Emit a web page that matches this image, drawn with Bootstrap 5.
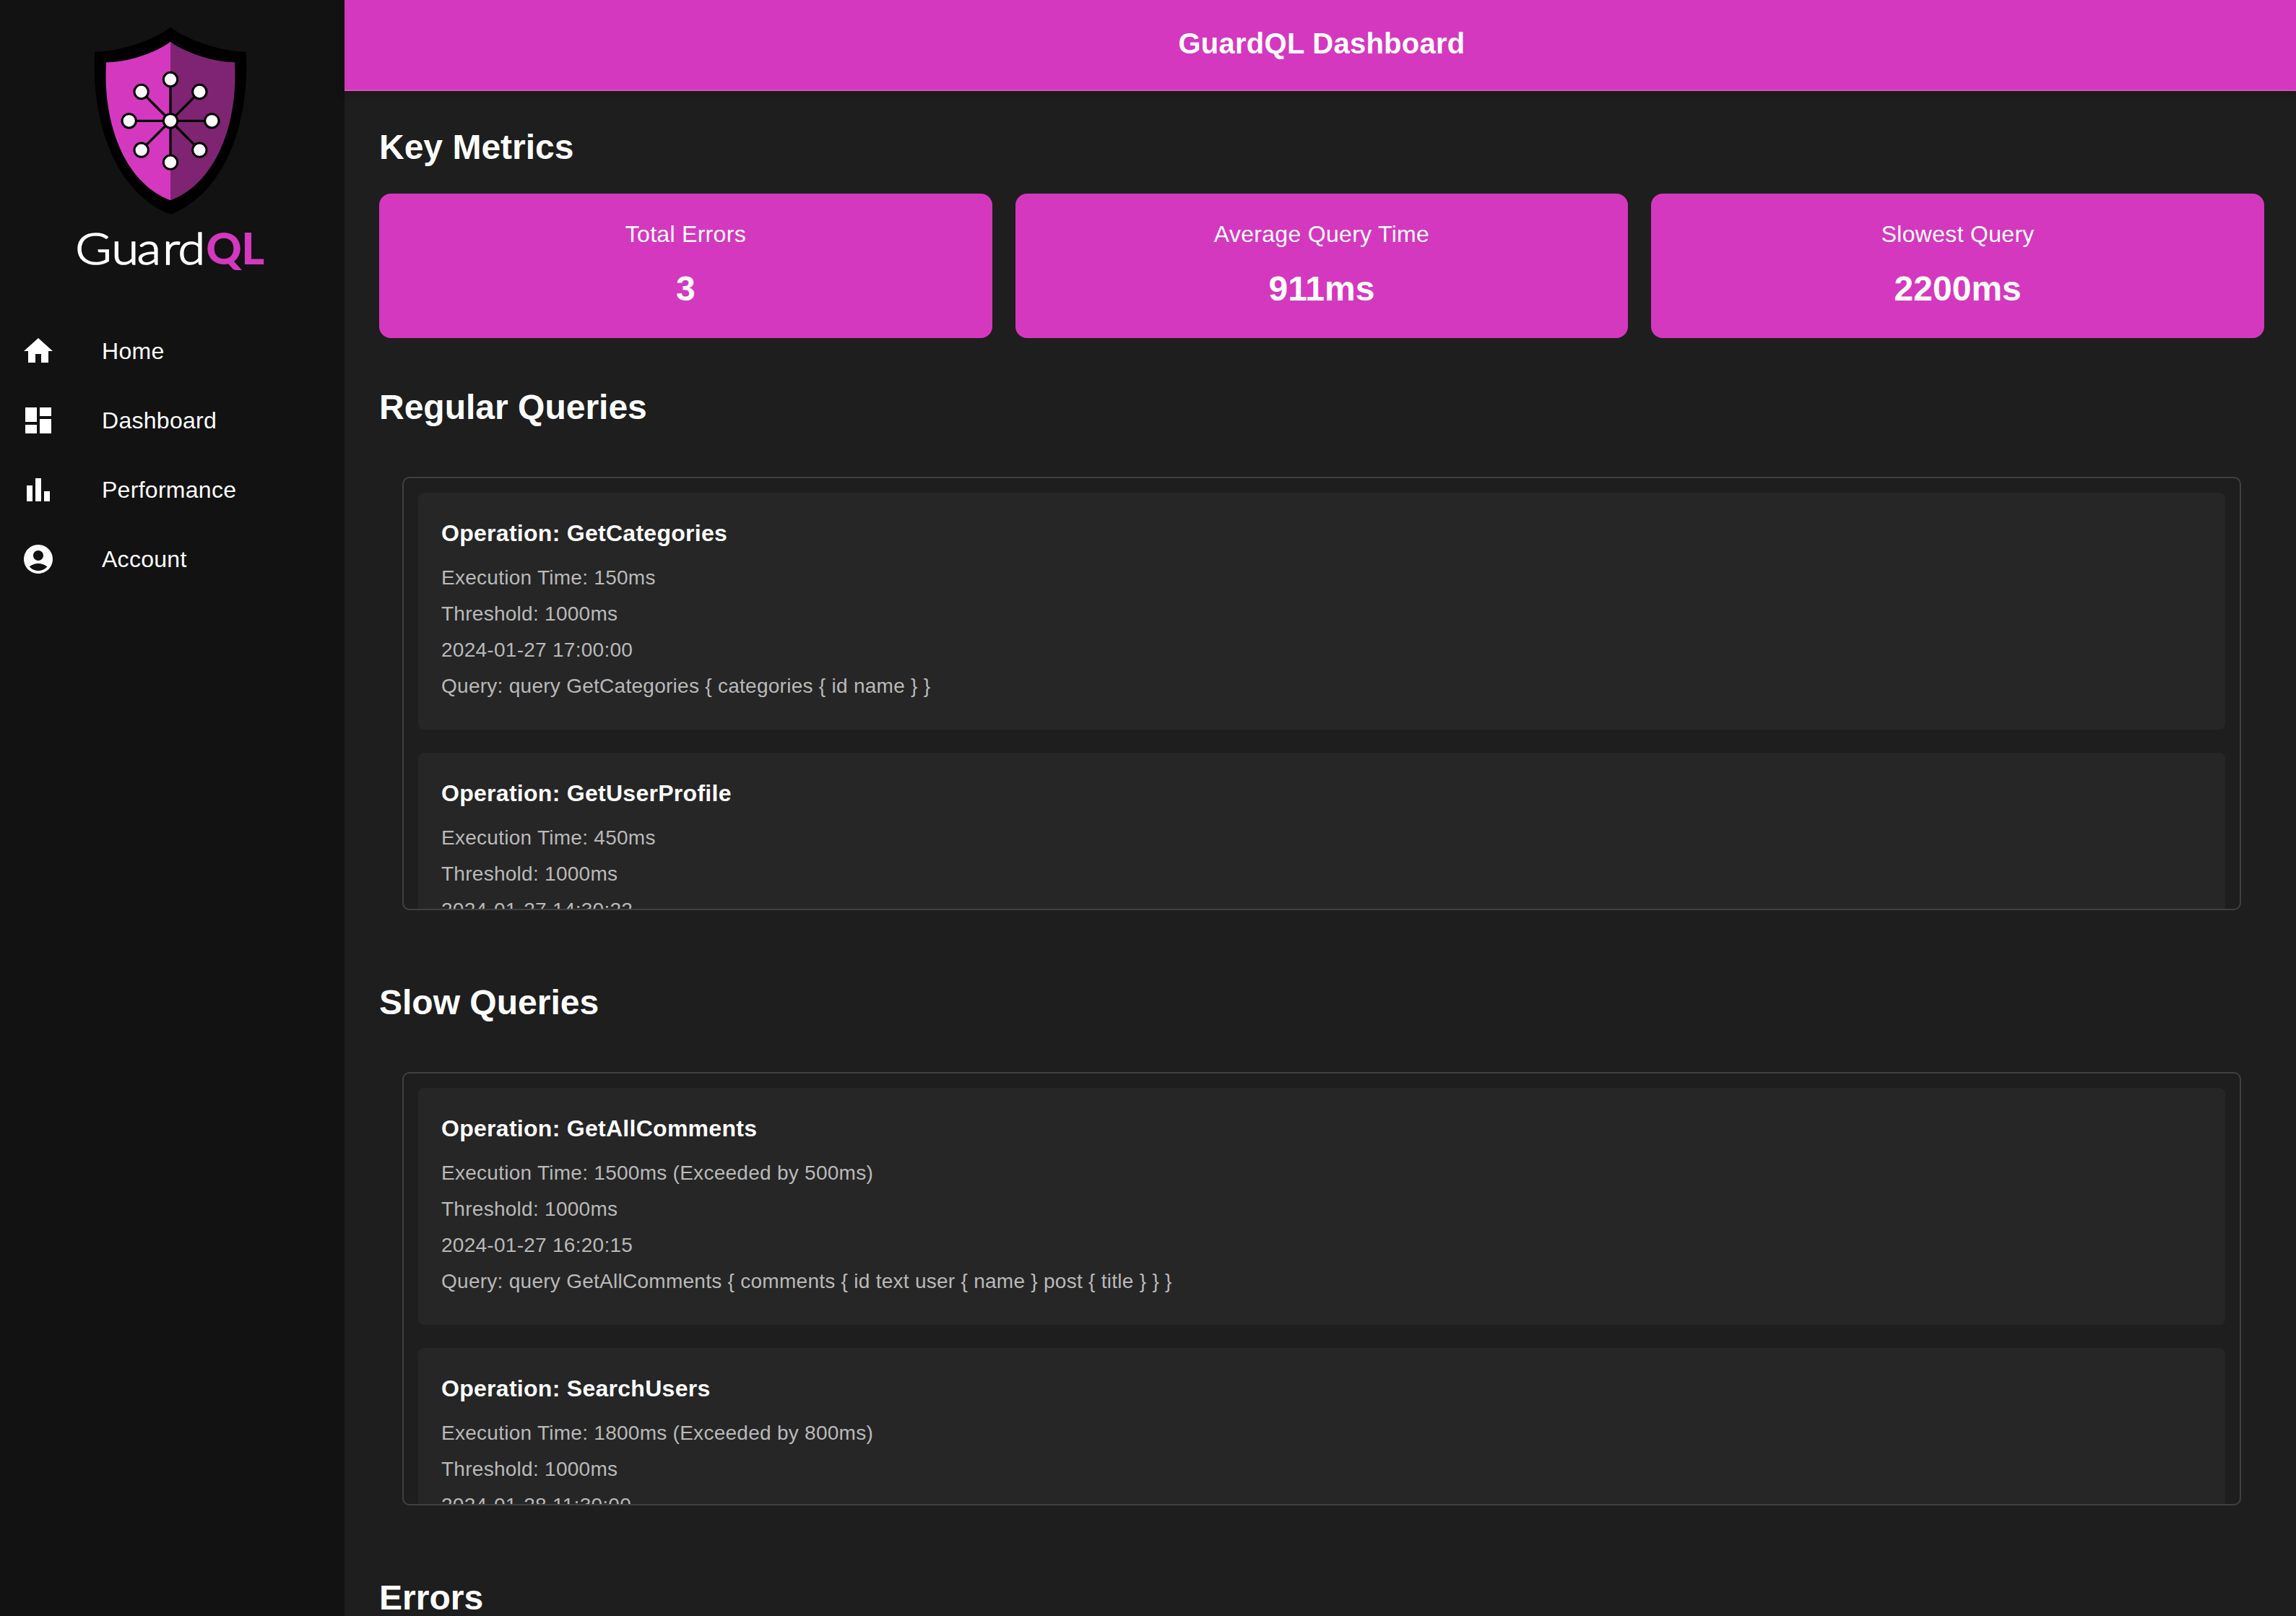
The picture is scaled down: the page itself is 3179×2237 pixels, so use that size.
<!DOCTYPE html>
<html lang="en">
<head>
<meta charset="utf-8">
<meta name="viewport" content="width=device-width, initial-scale=1">
<title>GuardQL Dashboard</title>
<link href="https://cdn.jsdelivr.net/npm/bootstrap@5.3.0/dist/css/bootstrap.min.css" rel="stylesheet">
<style>
  :root { --pink: #d438bf; }
  body { font-family: "Liberation Sans", Arial, sans-serif; background: #1e1e1e; color: #fff; height: 100vh; }
  .side { width: 477px; background: #121212; padding: 20px 29px 0; }
  .logo { width: 300px; height: 370px; margin-left: 61px; }
  .side .nav { margin-top: 48px; }
  .side .nav-link { height: 96px; padding: 0; gap: 64px; color: #fff; font-size: 32px; letter-spacing: .28px; }
  .side svg.ico { width: 48px; height: 48px; fill: #fff; }
  .topbar { height: 126px; padding: 28px 0 0 4px; background: var(--pink); border-bottom: 2px solid #d94fc7; box-shadow: 0 4px 12px rgba(0,0,0,.2); }
  .topbar h1 { font-size: 40px; line-height: 64px; letter-spacing: .26px; font-weight: 700; }
  .content { padding: 46px 44px 0 48px; }
  h2 { font-size: 48px; line-height: 64px; font-weight: 700; }
  .metrics { gap: 32px; margin: 32px 0 64px; }
  .metric { flex: 1 1 0; height: 200px; padding: 32px; border-radius: 16px; background: var(--pink); }
  .metric .name { font-size: 32px; line-height: 48px; letter-spacing: .3px; }
  .metric .value { font-size: 48px; line-height: 64px; margin-top: 20px; font-weight: 700; }
  .panel { height: 600px; margin: 64px 32px 96px; padding: 20px; border: 2px solid #404040; border-radius: 10px; }
  .entry { flex: none; height: 328px; padding: 32px; border-radius: 8px; background: #262626; margin-bottom: 32px; }
  .entry h3 { font-size: 32px; line-height: 48px; letter-spacing: .28px; font-weight: 700; margin-bottom: 18px; }
  .entry p { font-size: 28px; line-height: 40px; letter-spacing: .27px; color: #b9b9b9; margin-bottom: 10px; }
</style>
<script src="https://cdn.jsdelivr.net/npm/bootstrap@5.3.0/dist/js/bootstrap.bundle.min.js"></script>
</head>
<body class="d-flex overflow-hidden">
<aside class="side flex-shrink-0">
  <svg class="logo d-block" viewBox="0 0 900 1110" role="img" aria-label="GuardQL">
    <path d="M438 53C362 111 219 155 124 155C107 447 211 744 438 830C665 744 769 447 752 155C657 155 514 111 438 53Z" fill="#000"/>
    <path d="M438 113C373 163 251 199 171 199C156 447 245 699 438 772Z" fill="#d438bf"/>
    <path d="M438 113C503 163 625 199 705 199C720 447 631 699 438 772Z" fill="#7f2472"/>
    <path d="M438 270V614M266 442H610M317 321L559 563M559 321L317 563" stroke="#000" stroke-width="10"/>
    <g fill="#fff" stroke="#000" stroke-width="9">
      <circle cx="438" cy="442" r="29"/><circle cx="438" cy="270" r="29"/><circle cx="438" cy="614" r="29"/>
      <circle cx="266" cy="442" r="29"/><circle cx="610" cy="442" r="29"/><circle cx="317" cy="321" r="29"/>
      <circle cx="559" cy="321" r="29"/><circle cx="317" cy="563" r="29"/><circle cx="559" cy="563" r="29"/>
    </g>
    <g font-family="Lato, sans-serif" font-size="183">
      <text transform="scale(1.12 1)" x="38 173 267 362 419" y="1039" fill="#fff" font-weight="300" stroke="#fff" stroke-width="5">Guard</text>
      <text x="586 733" y="1039" fill="#d438bf" font-weight="900">QL</text>
    </g>
  </svg>
  <nav class="nav flex-column">
    <a class="nav-link d-flex align-items-center" href="#"><svg class="ico" viewBox="0 0 24 24"><path d="M10 20v-6h4v6h5v-8h3L12 3 2 12h3v8z"/></svg>Home</a>
    <a class="nav-link d-flex align-items-center" href="#"><svg class="ico" viewBox="0 0 24 24"><path d="M3 13h8V3H3zm0 8h8v-6H3zm10 0h8V11h-8zm0-18v6h8V3z"/></svg>Dashboard</a>
    <a class="nav-link d-flex align-items-center" href="#"><svg class="ico" viewBox="0 0 24 24"><path d="M4 9h4v11H4zm12 4h4v7h-4zm-6-9h4v16h-4z"/></svg>Performance</a>
    <a class="nav-link d-flex align-items-center" href="#"><svg class="ico" viewBox="0 0 24 24"><path d="M12 2C6.48 2 2 6.48 2 12s4.48 10 10 10 10-4.48 10-10S17.52 2 12 2zm0 4c1.93 0 3.5 1.57 3.5 3.5S13.93 13 12 13s-3.5-1.57-3.5-3.5S10.07 6 12 6zm0 14c-2.03 0-4.43-.82-6.14-2.88C7.55 15.8 9.68 15 12 15s4.45.8 6.14 2.12C16.43 19.18 14.03 20 12 20z"/></svg>Account</a>
  </nav>
</aside>
<main class="flex-grow-1">
  <header class="topbar text-center"><h1 class="m-0">GuardQL Dashboard</h1></header>
  <div class="content">
    <h2 class="m-0">Key Metrics</h2>
    <div class="metrics d-flex text-center">
      <div class="metric"><div class="name">Total Errors</div><div class="value">3</div></div>
      <div class="metric"><div class="name">Average Query Time</div><div class="value">911ms</div></div>
      <div class="metric"><div class="name">Slowest Query</div><div class="value">2200ms</div></div>
    </div>
    <h2 class="m-0">Regular Queries</h2>
    <section class="panel d-flex flex-column overflow-hidden">
      <article class="entry">
        <h3>Operation: GetCategories</h3>
        <p>Execution Time: 150ms</p>
        <p>Threshold: 1000ms</p>
        <p>2024-01-27 17:00:00</p>
        <p>Query: query GetCategories { categories { id name } }</p>
      </article>
      <article class="entry">
        <h3>Operation: GetUserProfile</h3>
        <p>Execution Time: 450ms</p>
        <p>Threshold: 1000ms</p>
        <p>2024-01-27 14:30:22</p>
      </article>
    </section>
    <h2 class="m-0">Slow Queries</h2>
    <section class="panel d-flex flex-column overflow-hidden">
      <article class="entry">
        <h3>Operation: GetAllComments</h3>
        <p>Execution Time: 1500ms (Exceeded by 500ms)</p>
        <p>Threshold: 1000ms</p>
        <p>2024-01-27 16:20:15</p>
        <p>Query: query GetAllComments { comments { id text user { name } post { title } } }</p>
      </article>
      <article class="entry">
        <h3>Operation: SearchUsers</h3>
        <p>Execution Time: 1800ms (Exceeded by 800ms)</p>
        <p>Threshold: 1000ms</p>
        <p>2024-01-28 11:30:00</p>
      </article>
    </section>
    <h2 class="m-0">Errors</h2>
  </div>
</main>
</body>
</html>
